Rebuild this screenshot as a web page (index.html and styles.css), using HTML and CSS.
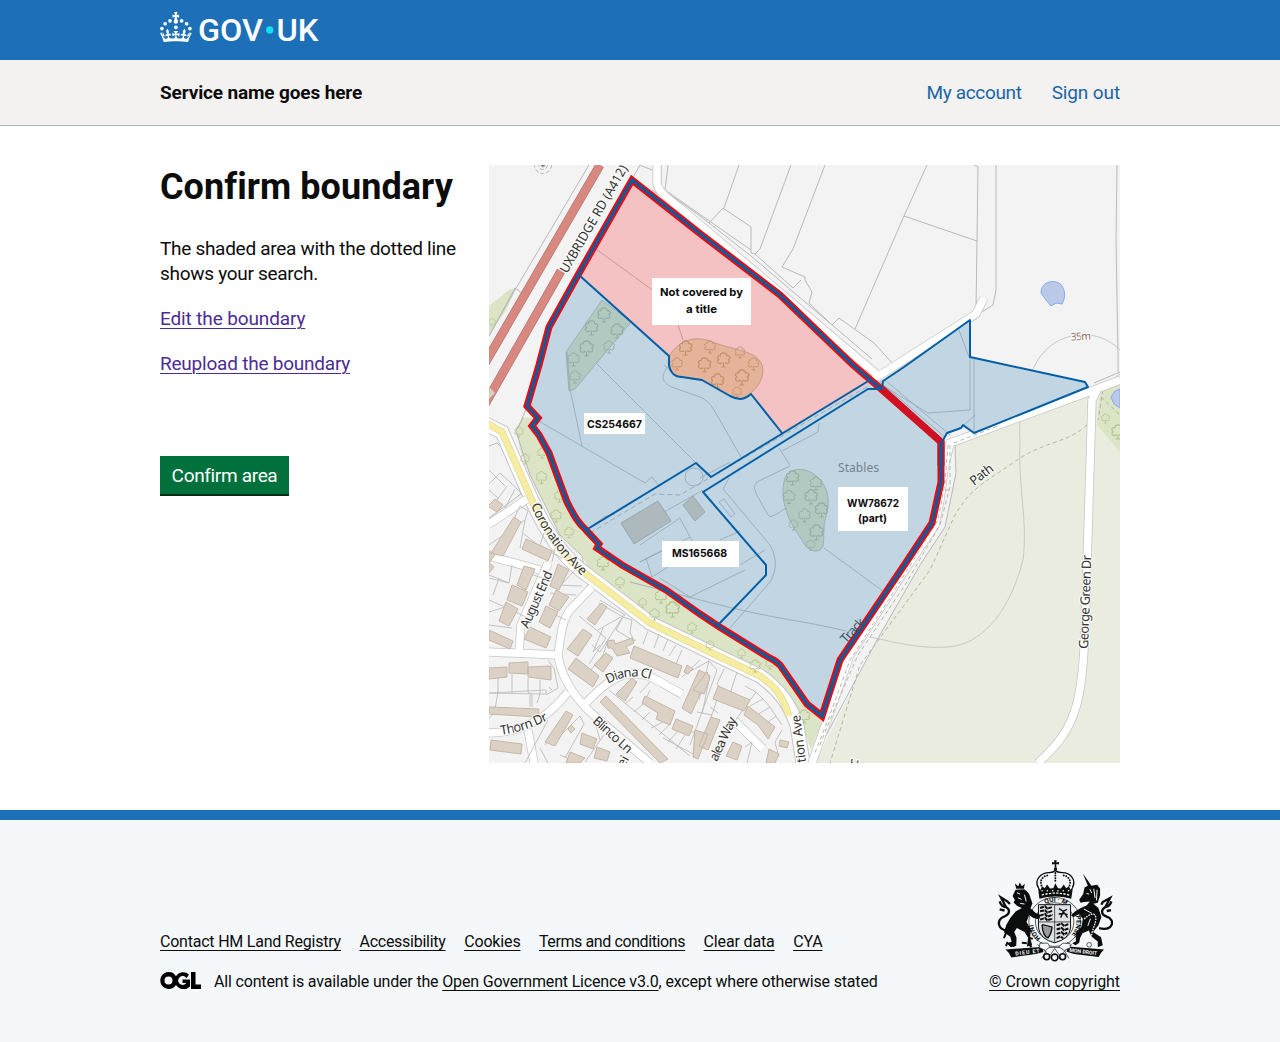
FILE: index.html
```html
<!DOCTYPE html>
<html lang="en">
<head>
<meta charset="utf-8">
<title>Confirm boundary</title>
<link rel="stylesheet" href="styles.css">
</head>
<body>
<header class="header">
  <div class="container">
    <svg class="logo" viewBox="0 0 324 60" width="162" height="30" role="img" aria-label="GOV.UK">
      <circle cx="20" cy="17.6" r="3.7"/><circle cx="10.2" cy="23.5" r="3.7"/><circle cx="3.7" cy="33.2" r="3.7"/>
      <circle cx="31.7" cy="30.6" r="3.7"/><circle cx="43.3" cy="17.6" r="3.7"/><circle cx="53.2" cy="23.5" r="3.7"/><circle cx="59.7" cy="33.2" r="3.7"/>
      <path d="M33.1,9.8c.2-.1.3-.3.5-.5l4.6,2.4v-6.8l-4.6,1.5c-.1-.2-.3-.3-.5-.5l1.9-5.9h-6.7l1.9,5.9c-.2.1-.3.3-.5.5l-4.6-1.5v6.8l4.6-2.4c.1.2.3.3.5.5l-2.6,8c-.9,2.8,1.2,5.7,4.1,5.7h0c3,0,5.1-2.9,4.1-5.7l-2.6-8ZM37,37.9s-3.4,3.8-4.1,6.1c2.2,0,4.2-.5,6.4-2.8l-.7,8.5c-2-2.8-4.4-4.1-5.7-3.8.1,3.1.5,6.7,5.8,7.2,3.7.3,6.7-1.5,7-3.8.4-2.6-2-4.3-3.7-1.6-1.4-4.5,2.4-6.1,4.9-3.2-1.9-4.5-1.8-7.7,2.4-10.9,3,4,2.6,7.3-1.2,11.1,2.4-1.3,6.2,0,4,4.6-1.2-2.8-3.7-2.2-4.2.2-.3,1.7.7,3.7,3,4.2,1.9.3,4.7-.9,7-5.9-1.3,0-2.4.7-3.9,1.7l2.4-8c.6,2.3,1.4,3.7,2.2,4.5.6-1.6.5-2.8,0-5.3l5,1.8c-2.6,3.6-5.2,8.7-7.3,17.5-7.4-1.1-15.7-1.7-24.5-1.7h0c-8.8,0-17.1.6-24.5,1.7-2.1-8.9-4.7-13.9-7.3-17.5l5-1.8c-.5,2.5-.6,3.7,0,5.3.8-.8,1.6-2.3,2.2-4.5l2.4,8c-1.5-1-2.6-1.7-3.9-1.7,2.3,5,5.2,6.2,7,5.9,2.3-.4,3.3-2.4,3-4.2-.5-2.4-3-3.1-4.2-.2-2.2-4.6,1.6-6,4-4.6-3.7-3.7-4.2-7.1-1.2-11.1,4.2,3.2,4.3,6.4,2.4,10.9,2.5-2.8,6.3-1.3,4.9,3.2-1.8-2.7-4.1-1-3.7,1.6.3,2.3,3.3,4.1,7,3.8,5.4-.5,5.7-4.2,5.8-7.2-1.3-.2-3.7,1-5.7,3.8l-.7-8.5c2.2,2.3,4.2,2.7,6.4,2.8-.7-2.3-4.1-6.1-4.1-6.1h10.6,0Z"/>
      <text class="wordmark" x="76" y="58" textLength="130" lengthAdjust="spacingAndGlyphs">GOV</text>
      <circle class="dot" cx="219.5" cy="36" r="7.3"/>
      <text class="wordmark" x="233" y="58" textLength="84" lengthAdjust="spacingAndGlyphs">UK</text>
    </svg>
  </div>
</header>
<div class="service">
  <div class="container service-row">
    <span class="service-name">Service name goes here</span>
    <nav class="service-nav"><a class="account">My account</a><a class="sign-out">Sign out</a></nav>
  </div>
</div>
<main class="container main">
  <section class="intro">
    <h1>Confirm boundary</h1>
    <p class="lead">The shaded area with the dotted line shows your search.</p>
    <p><a class="visited edit">Edit the boundary</a></p>
    <p><a class="visited reupload">Reupload the boundary</a></p>
    <button class="button">Confirm area</button>
  </section>
  <svg class="map" viewBox="489 165 631 598" width="631" height="598">
    <defs>
      <symbol id="tree" viewBox="2 1 10 13" overflow="visible">
        <path d="M7 14v-4M5 14h4M6 10C2 12 0 9 2.500 7C0 5 2 3 4 3.500C4 0 10 0 10 3.500C13 3 14 6 11.500 7C14 10 11 11.500 8 10"/>
      </symbol>
    </defs>

    <!-- fields -->
    <path class="field" d="M955 445L1087 393L1120 378V763H815L877 640L920 565L945 527L956 473Z"/>
    <path class="scrub" d="M1100 392L1120 372V452L1097 425Z"/>
    <path class="verge" d="M516 428L523 417L532 418V428L548 455L566 504L585 533L597 550L622 567L666 592L718 628L775 661L806 706L823 719L811 750C800 715 790 700 765 680L700 650L655 628L600 590L582 556L560 535L530 475L520 450Z"/>
    <path class="verge" d="M489 306L510 289L515 290L507 309L489 335Z"/>
    <path class="water" d="M1045 284C1050 280 1059 281 1062 286C1066 292 1065 299 1062 304L1056 303L1051 306L1046 300L1041 293C1041 288 1043 286 1045 284Z"/>
    <path class="water" d="M1120 389L1115 391L1111 397L1114 404L1120 408Z"/>
    <path class="contour" d="M1120 350C1095 325 1055 332 1038 360C1025 382 1018 402 1020 440C1018 490 1028 520 1023 560C1010 610 985 640 955 646C925 651 890 641 870 637"/>

    <!-- parcel edges -->
    <g class="edge">
      <path d="M589 165L515 290L489 336M640 165L550 325L530 400L518 428M639 165L655 171V189M661 165V188L700 216L751 256L872 359M652 190L700 223L865 360M668 165L665 190L751 250M709 223L723 208L751 227V253L755 254L760 249L791 165M739 165L724 208M825 165L793 249L782 267L805 277V280L812 292L809 303L832 325L839 318L874 343L894 365M755 254L793 288L801 280M927 165L904 216L855 329M904 216L977 241M974 165L978 167L977 240L976 310L894 363M996 165V290L993 305L975 316M1117 165L1116 240L1118 355V372"/>
      <path d="M489 336L515 288L522 293M489 446L497 443L506 452L521 494L489 518"/>
      <path d="M523 418L516 431L530 475L560 535L582 556L585 575M955 445L1087 395M955 445L956 473L945 527L920 565L877 640L813 760M1120 372L1094 383"/>
    </g>
    <path class="dash" d="M1087 425C1065 445 1043 440 1010 465C980 485 970 490 955 515L930 570L860 665L830 763M1101 397L1120 415M1103 390L1098 420"/>

    <!-- main roads -->
    <path class="a-case" d="M600 165L484 365M561 271L484 406"/>
    <path class="a-road" d="M600 165L484 365M561 271L484 406"/>
    <path class="road-case" d="M481 422L502 432L530 496C545 530 562 558 590 577L650 623L710 652L760 676C780 690 790 705 797 725L803 763"/>
    <path class="road" d="M481 422L502 432L530 496C545 530 562 558 590 577L650 623L710 652L760 676C780 690 790 705 797 725L803 763"/>
    <path class="b-case" d="M481 420L502 432L530 496C545 530 562 558 590 577L650 623L710 652L760 676C775 686 782 695 789 716"/>
    <path class="b-road" d="M481 420L502 432L530 496C545 530 562 558 590 577L650 623L710 652L760 676C775 686 782 695 789 716"/>

    <!-- white roads -->
    <g class="road-case">
      <path d="M592 587L570 610C562 620 561 635 558 655C560 670 568 690 590 712L650 763"/>
      <path d="M489 652L560 655M519 654L521 625L548 563M489 733C520 732 545 722 568 692M528 730L534 763M584 705C600 688 615 675 630 674C650 672 660 683 682 694M527 499L489 524M489 556L540 570M735 721L763 749"/>
      <path d="M1120 380L1094 390L950 443L944 470L940 500L935 525L905 570L850 655L812 763M866 384L976 314L984 298M1098 388L1092 400L1087 565L1086 600C1083 700 1080 725 1038 763M657 165V182C657 190 665 196 680 208L880 377"/>
    </g>
    <g class="street">
      <path d="M592 587L570 610C562 620 561 635 558 655C560 670 568 690 590 712L650 763"/>
      <path d="M489 652L560 655M519 654L521 625L548 563M489 733C520 732 545 722 568 692M528 730L534 763M584 705C600 688 615 675 630 674C650 672 660 683 682 694M527 499L489 524M489 556L540 570M735 721L763 749"/>
      <path d="M1120 380L1094 390L950 443L944 470L940 500L935 525L905 570L850 655L812 763M866 384L976 314L984 298M1098 388L1092 400L1087 565L1086 600C1083 700 1080 725 1038 763M657 165V182C657 190 665 196 680 208L880 377"/>
    </g>
    <path class="dash" d="M948 445L945 483L938 520L900 582L850 660L828 720L814 755M954 443L1000 425M950 445V487L940 525L905 585L858 655L834 710L820 745M945 490H950"/>

    <!-- garden plots -->
    <g class="plot">
      <path d="M489 578L509 583M489 600L505 607M489 545L525 520L528 511L520 506L513 521M489 484L500 473L510 482L521 493M497 500L507 486M489 490L499 499M505 508L515 489M489 470L505 486M525 520L520 548M524 534L538 545L562 558M540 545L545 530M552 562L555 548M489 625L512 628M512 565L509 583L489 575M527 573L552 581M545 610L566 620M575 570L563 583M550 593L576 595M489 612L505 607L528 618M499 578L493 595M555 585L582 586"/>
      <path d="M548 660L554 668L558 688L546 695V690L490 693M498 678V692L495 709M512 674V693M528 678V692L532 695V707M540 680V694L537 703M530 695V707M549 687L552 690M489 678L500 676M489 693L545 694"/>
      <path d="M579 616L606 638L589 664M598 630L610 623L625 615L600 600M603 628L593 652L600 645M571 650L576 655M590 671L603 655L608 640M622 618L600 652L592 645M599 603L623 617L616 630L634 641L630 632L632 620L623 617M648 631L643 644M659 634L654 648M668 639L663 651M676 645L669 656M682 650L676 664M636 640L625 643"/>
      <path d="M609 690L690 756M617 697L626 693M625 704L633 697M634 712L643 704M642 720L650 712M651 728L663 722M659 735L671 723M668 742L679 730M676 749L685 735M640 693L650 682M650 690L644 703M682 677L700 660M689 672L709 661L699 700M709 661L717 670L702 712L690 745M663 738L695 755M680 728L702 735M697 712L712 715"/>
      <path d="M704 738L721 688L717 684L724 669M710 675L702 714M728 700L737 672M745 686L756 692L735 721M756 692L763 699L750 706M763 699L770 707L757 715M770 707L776 716L764 725M776 716L782 725M782 730L775 742L779 757M710 707L718 713M735 721L720 745M745 747L752 742L747 763M489 718L500 708M561 735L580 716L584 724L565 758M545 745L560 722M560 755L576 762M595 722L600 740M604 735L585 762M540 748L548 763M548 720L525 763"/>
    </g>

    <!-- buildings -->
    <g class="building">
      <path d="M495 499L503 505L497 512L488 506ZM514 517L521 522L503 556L491 553ZM526 539L552 551L548 561L522 549ZM489 387L495 393L489 399ZM489 551L495 555L489 563ZM489 563L494 567L489 573ZM524 566L535 569L526 590L517 585ZM512 585L528 592L522 606L507 600ZM506 602L518 609L509 626L499 621ZM489 630L513 641L510 649L489 640ZM530 627L551 637L546 648L524 639ZM558 564L569 570L559 590L550 586ZM556 590L569 597L559 611L549 605ZM546 606L558 612L550 628L539 622Z"/>
      <path d="M489 668L507 667V677L489 679ZM509 663L528 662V674L509 673ZM528 667L551 666V680L528 677ZM489 707L539 709L538 717L489 714ZM491 740L522 744L521 754L490 750ZM566 711L573 715L555 746L545 742ZM571 725L575 729L571 733L568 729ZM582 733L597 739L593 749L580 744ZM597 747L610 752L607 761L594 758ZM570 752L585 758L580 763H566Z"/>
      <path d="M601 603L607 607L595 625L587 619ZM583 629L592 635L578 656L567 649ZM576 658L599 676L593 687L568 669ZM606 653L613 658L603 672L594 665ZM607 641L614 640L615 644L632 638L634 643L626 647L630 653L617 656L612 648L608 648ZM634 646L682 666L678 678L630 658ZM632 678L637 682L625 701L616 694ZM606 696L668 759L660 763L600 702ZM645 696L675 711L670 725L656 719L658 713L642 703ZM676 719L693 726L689 736L672 729ZM699 670L709 675L691 714L682 708ZM687 665L693 669L688 674L684 672Z"/>
      <path d="M718 686L750 700L744 711L713 699ZM707 672L710 678L704 694L693 690ZM748 706L775 727L768 739L758 725L744 715ZM711 717L720 720L708 750L699 746ZM780 740L789 742L787 748L779 746ZM733 742L742 746L737 760L726 756ZM769 749L779 754L775 763H766ZM695 730L708 734L698 759L693 757Z"/>
    </g>

    <!-- searched area and titles -->
    <path class="area-blue" d="M579 275L549 327L539 365L527 406L538 418L532 426L549 453L567 502L586 530L599 546L622 565L666 590L718 626L768 657L780 665L807 704L822 716L840 660L905 564L932 523L941 482L942 442L947 433L962 427L974 433L1088 387L1085 382L970 357V320L883 380L870 380Z"/>
    <path class="area-pink" d="M632 180L579 275L669 356V365C671 375 676 377 682 377L702 380L730 396C740 401 745 399 751 394L782 433L872 382L853 365L780 295L698 232Z"/>
    <g class="wood">
      <path d="M602 300L631 322L575 389L569 391L566 352Z"/>
      <path d="M785 478C790 467 805 467 815 475C829 487 831 500 825 520C822 540 826 545 820 550C813 553 806 549 802 540C790 524 778 500 785 478Z"/>
    </g>
    <path class="wood-red" d="M669 356C680 339 696 336 710 341C731 350 757 350 762 365C765 375 760 385 751 393C743 401 735 399 729 395L704 381L682 377C669 375 667 365 669 356Z"/>
    <path class="inner-red" d="M596 249L655 292M678 325L683 340"/>
    <g class="inner">
      <path d="M567 352L570 389L582 446M537 420L645 483L652 477L659 486M597 364L696 463M672 372L664 365M668 366C658 380 664 385 680 390L700 397Q708 400 714 410L741 457M779 448L790 465M782 451L818 432L819 423M790 466L757 482C752 488 754 490 768 515C772 520 780 510 787 508M729 478L723 489L770 545C778 560 776 572 770 582L730 628M719 502L724 499L735 514L731 517ZM703 490L650 520M700 478L730 462M586 530L604 517L615 514M640 545L680 518L690 537L640 562L672 545M690 537L700 558M646 558L652 577L668 567M660 578L690 597L745 570M720 540L740 531M740 565L765 550M824 548L884 592M630 582L720 605C780 620 800 620 846 631M882 385L928 413L970 410M880 382L945 437M885 380L950 435M970 357V410M974 357V432M959 330L969 357M962 427L975 415"/>
      <circle cx="694" cy="477" r="9"/>
    </g>
    <path class="inner-dash" d="M590 533L655 494L680 495L870 385"/>
    <path class="shed" d="M658 501L671 521L634 544L621 523ZM693 496L705 512L695 521L683 505Z"/>

    <g class="trees tw">
      <use href="#tree" x="598" y="308" width="12" height="14"/><use href="#tree" x="585" y="321" width="13" height="14"/><use href="#tree" x="611" y="324" width="12" height="14"/><use href="#tree" x="580" y="341" width="13" height="15"/><use href="#tree" x="604" y="341" width="10" height="12"/><use href="#tree" x="568" y="353" width="11" height="13"/><use href="#tree" x="570" y="371" width="10" height="12"/>
      <use href="#tree" x="786" y="471" width="13" height="14"/><use href="#tree" x="810" y="477" width="12" height="13"/><use href="#tree" x="784" y="490" width="10" height="14"/><use href="#tree" x="804" y="490" width="14" height="14"/><use href="#tree" x="816" y="503" width="11" height="14"/><use href="#tree" x="798" y="509" width="13" height="13"/><use href="#tree" x="789" y="520" width="9" height="10"/><use href="#tree" x="810" y="525" width="13" height="15"/><use href="#tree" x="805" y="540" width="11" height="10"/>
    </g>
    <g class="trees tr">
      <use href="#tree" x="679" y="341" width="13" height="14"/><use href="#tree" x="704" y="341" width="12" height="12"/><use href="#tree" x="672" y="358" width="10" height="12"/><use href="#tree" x="698" y="358" width="13" height="14"/><use href="#tree" x="717" y="353" width="13" height="14"/><use href="#tree" x="735" y="347" width="10" height="11"/><use href="#tree" x="748" y="358" width="11" height="12"/><use href="#tree" x="711" y="374" width="13" height="14"/><use href="#tree" x="735" y="370" width="14" height="15"/><use href="#tree" x="731" y="387" width="12" height="10"/>
    </g>
    <g class="trees tg">
      <use href="#tree" x="515" y="427" width="8" height="10"/><use href="#tree" x="538" y="448" width="8" height="10"/><use href="#tree" x="521" y="454" width="8" height="10"/><use href="#tree" x="537" y="471" width="9" height="13"/><use href="#tree" x="555" y="491" width="9" height="11"/><use href="#tree" x="550" y="510" width="12" height="12"/><use href="#tree" x="565" y="527" width="8" height="11"/><use href="#tree" x="597" y="557" width="12" height="13"/><use href="#tree" x="616" y="577" width="8" height="11"/><use href="#tree" x="655" y="590" width="12" height="13"/><use href="#tree" x="666" y="602" width="13" height="15"/><use href="#tree" x="639" y="598" width="7" height="10"/><use href="#tree" x="649" y="609" width="11" height="11"/><use href="#tree" x="688" y="622" width="8" height="12"/><use href="#tree" x="706" y="641" width="8" height="9"/><use href="#tree" x="738" y="648" width="7" height="11"/><use href="#tree" x="749" y="660" width="12" height="12"/><use href="#tree" x="766" y="659" width="8" height="10"/><use href="#tree" x="798" y="710" width="12" height="13"/><use href="#tree" x="1100" y="414" width="11" height="9"/><use href="#tree" x="1112" y="425" width="12" height="14"/><use href="#tree" x="489" y="318" width="6" height="9"/>
    </g>

    <!-- title boundaries -->
    <path class="search" d="M632 180L698 232L780 295L853 365L880 388L941 442V482L932 523L905 564L840 660L822 716L807 704L780 665Q775 660 768 657L718 626L700 614L666 590L622 565L597 548L599 544L586 530C577 522 574 515 567 502L557 475L549 453L539 435L532 426L538 418L527 406L539 365L549 327L578 275Z"/>
    <path class="overlap" d="M881 388L941 442V466"/>
    <path class="outline" d="M941 442V482L932 523L905 564L840 660L822 716L807 704L780 665Q775 660 768 657L718 626L700 614L666 590L622 565L597 548L599 544L586 530C577 522 574 515 567 502L557 475L549 453L539 435L532 426L538 418L527 406L539 365L549 327L578 275L632 180L698 232L780 295L853 365L880 388"/>
    <path class="title" d="M579 275L669 356V365C671 375 676 377 682 377L702 380L730 396C740 401 745 399 751 394L782 433M586 530L696 463L711 477L870 380M718 625L766 575V565L703 492L868 389H882L883 381L904 367L970 320V357L1085 382L1088 387L974 433L963 425L961 428L947 433L942 442"/>

    <!-- map text -->
    <g class="spot"><circle cx="543" cy="165" r="8.500"/><circle cx="543" cy="165" r="4.500"/><circle class="spot-dot" cx="543" cy="165" r="2"/></g>
    <g class="road-text">
      <text transform="translate(567 274) rotate(-60)" textLength="122" lengthAdjust="spacingAndGlyphs">UXBRIDGE RD (A412)</text>
      <path id="corr" class="guide" d="M531 505C540 530 560 555 583 577"/>
      <text><textPath href="#corr" textLength="88">Coronation Ave</textPath></text>
      <text transform="translate(528 629) rotate(-66)" textLength="61">August End</text>
      <path id="diana" class="guide" d="M608 684Q630 671 655 681"/>
      <text><textPath href="#diana" textLength="44">Diana Cl</textPath></text>
      <path id="thorn" class="guide" d="M501 735Q525 732 550 719"/>
      <text><textPath href="#thorn" textLength="50">Thorn Dr</textPath></text>
      <text transform="translate(592 722) rotate(42)" textLength="48">Blinco Ln</text>
      <text transform="translate(717 762) rotate(-65)" textLength="47">alea Way</text>
      <text transform="translate(806 762) rotate(-97)" textLength="48">tion Ave</text>
      <text transform="translate(624 768) rotate(-60)">ei</text>
      <text transform="translate(857 766) rotate(-75)">c</text>
      <text transform="translate(974 486) rotate(-38)" textLength="26">Path</text>
      <text class="track" transform="translate(846 644) rotate(-47)" textLength="29">Track</text>
      <text transform="translate(1088 649) rotate(-88)" textLength="94">George Green Dr</text>
      <text class="stables" x="838" y="472" textLength="41">Stables</text>
      <text class="height" x="1071" y="340" transform="rotate(-3 1080 338)" textLength="20">35m</text>
    </g>

    <!-- title labels -->
    <g class="tag">
      <path d="M652 278H751V325H652ZM584 413H645V434H584ZM662 541H739V567H662ZM838 487H908V531H838Z"/>
      <text x="660" y="296" textLength="83" lengthAdjust="spacingAndGlyphs">Not covered by</text>
      <text x="686" y="313" textLength="31" lengthAdjust="spacingAndGlyphs">a title</text>
      <text x="587" y="428" textLength="55" lengthAdjust="spacingAndGlyphs">CS254667</text>
      <text x="672" y="557" textLength="55" lengthAdjust="spacingAndGlyphs">MS165668</text>
      <text x="847" y="507" textLength="52" lengthAdjust="spacingAndGlyphs">WW78672</text>
      <text x="858" y="522" textLength="29" lengthAdjust="spacingAndGlyphs">(part)</text>
    </g>
  </svg>
</main>
<footer class="footer">
  <div class="container footer-row">
    <div class="footer-left">
      <div class="footer-links"><a class="fit-22">Contact HM Land Registry</a><a class="fit-26">Accessibility</a><a class="fit-15">Cookies</a><a class="fit-40">Terms and conditions</a><a class="fit-15">Clear data</a><a class="fit-15">CYA</a></div>
      <div class="licence">
        <svg class="ogl" viewBox="0 0 41 17" width="41" height="17"><path fill-rule="evenodd" d="M8.500 0A8.500 8.500 0 0 1 16 4.200A8.500 8.500 0 0 1 29 2.500L26.500 6.200A4.500 4.500 0 1 0 26 11.500V11H22.500V7.500H30V14.500A9 9 0 0 1 16 13A8.500 8.500 0 1 1 8.500 0ZM8.500 4.500A4 4 0 1 0 8.500 12.500A4 4 0 0 0 8.500 4.500ZM31 0H35.500V12.500H41V17H31Z"/></svg>
        <span class="licence-text">All content is available under the <a>Open Government Licence v3.0</a>, except where otherwise stated</span>
      </div>
    </div>
    <div class="copyright">
      <svg class="arms" viewBox="80 30 350 306" width="116" height="102">
        <!-- crown -->
        <path d="M252 30H260L259 37L267 35V43L259 41V52H254V41L246 43V35L253 37Z"/>
        <circle cx="256.500" cy="56" r="5"/>
        <path class="a-line4" d="M204 112C192 88 214 66 238 67Q250 67 256 61Q262 67 276 67C300 66 320 88 308 112"/>
        <path class="a-dots" d="M214 106C207 88 222 74 238 76M299 106C306 88 291 74 275 76M256 68V100"/>
        <path d="M203 106L211 120L216 108L224 114L231 103L240 115L250 114L256 99L264 114L273 115L281 103L289 114L297 108L302 120L310 106L304 146Q256 132 208 146Z"/>
        <path class="a-hole" d="M215 135Q256 123 298 135"/>
        <path class="a-dots2" d="M216 122H297"/>
        <!-- garter and shield -->
        <ellipse class="a-ring" cx="254" cy="216" rx="78" ry="74"/>
        <ellipse class="a-ring" cx="254" cy="216" rx="58" ry="58"/>
        <path class="a-shield" d="M205 164H302V234Q298 268 254 279Q210 268 205 234Z"/>
        <path class="a-line2" d="M254 164V279M205 216H302"/>
        <path class="a-bars" d="M210 174L225 169L232 176L246 171M210 184L225 181L232 188L248 182M210 197L225 192L232 200L248 194M210 209L225 204L232 211L248 206M260 226L275 221L282 228L297 222M260 239L275 234L282 241L297 235M260 252L275 247L282 254L292 248M260 265L270 260L280 265"/>
        <path class="a-line4" d="M267 176L280 184L291 178M272 203L280 185L293 203M266 192L280 190L293 194"/>
        <path class="a-line4" d="M216 224L246 231Q245 250 234 264Q218 260 216 224"/>
        <path class="a-line2" d="M222 228V254M228 230V260M234 231V264M240 231V252"/>
        <path id="mottoTop" class="a-guide" d="M193 216A61 61 0 0 1 315 216"/>
        <text class="a-text"><textPath href="#mottoTop" startOffset="66">QUI · M</textPath></text>
        <path id="mottoLeft" class="a-guide" d="M222 272A64 64 0 0 1 191 200"/>
        <text class="a-text"><textPath href="#mottoLeft" startOffset="12">HONI</textPath></text>
        <path id="mottoRight" class="a-guide" d="M315 190A64 64 0 0 1 284 272"/>
        <text class="a-text"><textPath href="#mottoRight" startOffset="8">PENSE</textPath></text>
        <!-- lion -->
        <path d="M134 100L144 108L149 97L155 108L164 101L161 116H138Z"/>
        <path d="M136 119L162 117Q178 126 181 143L187 160L181 175L198 190L212 195L207 208L190 204L177 195L169 216L182 239L180 263L186 286L170 290L174 264L163 246L140 234L132 246L139 264L138 288L122 292L109 280L124 276L120 261L101 247L108 225L120 204L137 184L155 174L141 168L130 157L134 150L127 138Z"/>
        <path class="a-hole2" d="M140 128L150 132M143 143L154 148M163 134L168 154M150 160L163 162"/>
        <path class="a-tail" d="M108 242C80 236 80 210 99 201C123 192 118 177 107 171Q93 170 88 154M107 171L92 142L111 154L119 162M103 182L88 178"/>
        <path class="a-claw" d="M112 276L107 289M125 278L132 290M170 280L155 279M177 284L184 292M178 264L188 267M107 250L101 265"/>
        <!-- unicorn -->
        <path d="M339 70L365 107L382 104L391 115V136L384 158L371 161L386 174L395 201L386 226L370 246L394 262L399 286L384 292L384 275L365 260L357 242L338 250L331 264L328 279L317 286L307 280L318 274L318 249L335 230L339 207L328 192L311 201L303 196L316 184L333 174L351 166L360 154L343 156L332 158L328 149L340 132L344 112L354 107Z"/>
        <path class="a-hole2" d="M360 117L366 129M372 116L376 144M382 119L380 151M350 130L358 132M342 177L366 190M362 206L354 228"/>
        <path class="a-tail" d="M388 235C433 244 437 208 411 200C393 193 393 180 407 171Q421 169 425 154M407 171L421 144L399 156L395 164M411 183L424 180"/>
        <path class="a-chain" d="M343 207C372 180 386 193 374 226Q361 260 361 296"/>
        <circle class="a-line2" cx="358" cy="285" r="7"/>
        <!-- motto -->
        <path d="M106 299L202 292L216 289L220 307L197 313L123 323Q120 311 106 299ZM403 299L304 291L294 289L290 306L313 313L387 322Q390 311 403 299Z"/>
        <path class="a-thistle" d="M202 284L225 304L239 319L254 296L270 319L284 304L306 284M213 277L228 293H280L294 277M228 304L215 326M284 304L297 326"/>
        <path class="a-ring" d="M210 280L233 280L240 291L226 302L207 293ZM300 281L279 280L266 291L283 302L302 293Z"/>
        <circle class="a-knot" cx="230" cy="321" r="9"/><circle class="a-knot" cx="254" cy="323" r="10"/><circle class="a-knot" cx="278" cy="321" r="9"/>
        <text class="a-motto" transform="translate(136 317) rotate(-7)" textLength="74">DIEU ET</text>
        <text class="a-motto" transform="translate(298 306) rotate(7)" textLength="84" lengthAdjust="spacingAndGlyphs">MON DROIT</text>
      </svg>
      <a class="crown-link">© Crown copyright</a>
    </div>
  </div>
</footer>
</body>
</html>
```
FILE: styles.css
```css
* { box-sizing: border-box; }
body { margin: 0; background: #fff; color: #0b0c0c; font-family: Roboto, "Liberation Sans", sans-serif; font-size: 19px; line-height: 25px; }
.container { width: 960px; margin: 0 auto; }
.header { height: 60px; padding-top: 12px; background: #1d70b8; }
.logo { display: block; fill: #fff; overflow: visible; }
.wordmark { font-size: 62px; font-weight: 500; }
.dot { fill: #11e0f1; }
.service { background: #f3f2f1; border-bottom: 1px solid #b1b4b6; }
.service-row { display: flex; justify-content: space-between; padding: 20px 0; }
.service-name { font-weight: 700; letter-spacing: -.14px; }
.service-nav { display: flex; gap: 30px; color: #1a65a6; }
.account { letter-spacing: -.33px; }
.sign-out { letter-spacing: -.12px; }
.main { display: grid; grid-template-columns: 299px 631px; gap: 30px; padding: 39px 0 47px; align-items: start; }
h1 { margin: 2px 0 29px; font-size: 36px; line-height: 40px; font-weight: 700; letter-spacing: .06px; white-space: nowrap; }
p { margin: 0 0 20px; }
.lead { letter-spacing: -.29px; }
a { text-underline-offset: 3px; text-decoration-thickness: 1px; }
.visited { color: #4c2c92; text-decoration-line: underline; }
.edit { letter-spacing: -.13px; }
.reupload { letter-spacing: -.22px; }
.button { display: block; width: 129px; height: 38px; margin-top: 80px; padding: 1px 0 0; border: 0; background: #00703c; box-shadow: 0 2px 0 #002d18; color: #fff; font: inherit; letter-spacing: -.33px; white-space: nowrap; }
.footer { border-top: 10px solid #1d70b8; background: #f4f8fb; padding: 40px 0 50px; font-size: 16px; line-height: 20px; }
.footer-row { display: flex; justify-content: space-between; align-items: flex-end; }
.footer-links { display: flex; gap: 18.500px; margin-bottom: 20px; }
.footer a { text-decoration-line: underline; white-space: nowrap; }
.fit-15 { letter-spacing: -.15px; }
.fit-22 { letter-spacing: -.22px; }
.fit-26 { letter-spacing: -.26px; }
.fit-40 { letter-spacing: -.4px; }
.licence { display: flex; gap: 13px; }
.licence-text { letter-spacing: -.17px; white-space: nowrap; }
.copyright { display: flex; flex-direction: column; align-items: center; gap: 10px; }
.crown-link { letter-spacing: -.09px; }

.map { display: block; background: #f3f3f3; }
.map path, .map circle { fill: none; }
.map .field { fill: #e9ecdf; }
.map .scrub, .map .verge { fill: #dce4c6; }
.map .water { fill: #bac9e8; stroke: #86aaee; }
.contour { stroke: #c9c9c3; }
.edge { stroke: #b9b9b9; stroke-width: 1; }
.plot { stroke: #bcbcbc; stroke-width: .9; }
.dash { stroke: #b5b5ac; stroke-dasharray: 4 3; }
.a-case { stroke: #b3797b; stroke-width: 9; }
.a-road { stroke: #d98880; stroke-width: 7.5; }
.road-case { stroke: #c6c6c6; stroke-width: 9; }
.road { stroke: #fff; stroke-width: 8; }
path.road-case { stroke-width: 15; }
path.road { stroke-width: 13; }
.b-case { stroke: #d8d29a; stroke-width: 7; }
.b-road { stroke: #f7eda0; stroke-width: 6; }
.street { stroke: #fff; stroke-width: 7.5; }
.map .building path { fill: #dbd1c4; stroke: #c5b7a7; }
.map .area-blue { fill: #c1d5e3; }
.map .area-pink { fill: #f4c2c2; }
.map .wood path { fill: #b1c9c1; stroke: #9cb1b3; }
.map .wood-red { fill: #e4b39a; stroke: #c89a8d; }
.inner { stroke: #8fa3b0; stroke-opacity: .75; }
.inner-red { stroke: #c49c9f; }
.inner-dash { stroke: #9aabb7; stroke-dasharray: 5 3; }
.map .shed { fill: #aeb9be; stroke: #98a6ad; }
.trees { stroke-width: 1; }
.tw { stroke: #8fae9f; }
.tr { stroke: #c48e68; }
.tg { stroke: #afc088; }
.search { stroke: #f0060c; stroke-width: 7; }
.outline { stroke: #0e5b9c; stroke-width: 3.2; }
.overlap { stroke: #cf1124; stroke-width: 7; }
.title { stroke: #005ea5; stroke-width: 2; stroke-linejoin: round; }
.spot { stroke: #b5b5b5; stroke-dasharray: 4 2; }
.map .spot-dot { fill: #777; }
.road-text { font: 13px "Noto Sans", sans-serif; fill: #333; stroke: #fff; stroke-width: 2.5px; stroke-opacity: .75; paint-order: stroke; stroke-linejoin: round; }
.guide { stroke: none; }
.track { stroke: none; fill: #37566b; }
.stables { stroke: none; fill: #74828b; font-size: 12px; }
.height { font-size: 10.500px; fill: #8d6a5a; }
.map .tag path { fill: #fff; }
.tag { font: 700 11px Inter, sans-serif; fill: #0b0c0c; }

.arms { display: block; fill: #0b0c0c; }
.ogl { display: block; }
.arms .a-line4 { fill: none; stroke: #0b0c0c; stroke-width: 4; }
.arms .a-line2 { fill: none; stroke: #0b0c0c; stroke-width: 2; }
.arms .a-dots { fill: none; stroke: #0b0c0c; stroke-width: 6; stroke-linecap: round; stroke-dasharray: 0 8; }
.arms .a-dots2 { fill: none; stroke: #f4f8fb; stroke-width: 5; stroke-linecap: round; stroke-dasharray: 0 16; }
.arms .a-hole { fill: none; stroke: #f4f8fb; stroke-width: 4; stroke-dasharray: 7 4; }
.arms .a-hole2 { fill: none; stroke: #f4f8fb; stroke-width: 3; }
.arms .a-ring { fill: #f4f8fb; stroke: #0b0c0c; stroke-width: 2; }
.arms .a-shield { fill: #dfe2e4; stroke: #0b0c0c; stroke-width: 3; }
.arms .a-bars { fill: none; stroke: #0b0c0c; stroke-width: 6; stroke-dasharray: 12 2; }
.arms .a-guide { fill: none; }
.arms .a-text { font: 700 20px Roboto, sans-serif; }
.arms .a-tail { fill: none; stroke: #0b0c0c; stroke-width: 7; }
.arms .a-claw { fill: none; stroke: #0b0c0c; stroke-width: 6; }
.arms .a-chain { fill: none; stroke: #f4f8fb; stroke-width: 4; stroke-dasharray: 5 3; }
.arms .a-thistle { fill: none; stroke: #0b0c0c; stroke-width: 2; }
.arms .a-knot { fill: #f4f8fb; stroke: #0b0c0c; stroke-width: 5; }
.arms .a-motto { font: 700 16px Roboto, sans-serif; fill: #f4f8fb; }
```
